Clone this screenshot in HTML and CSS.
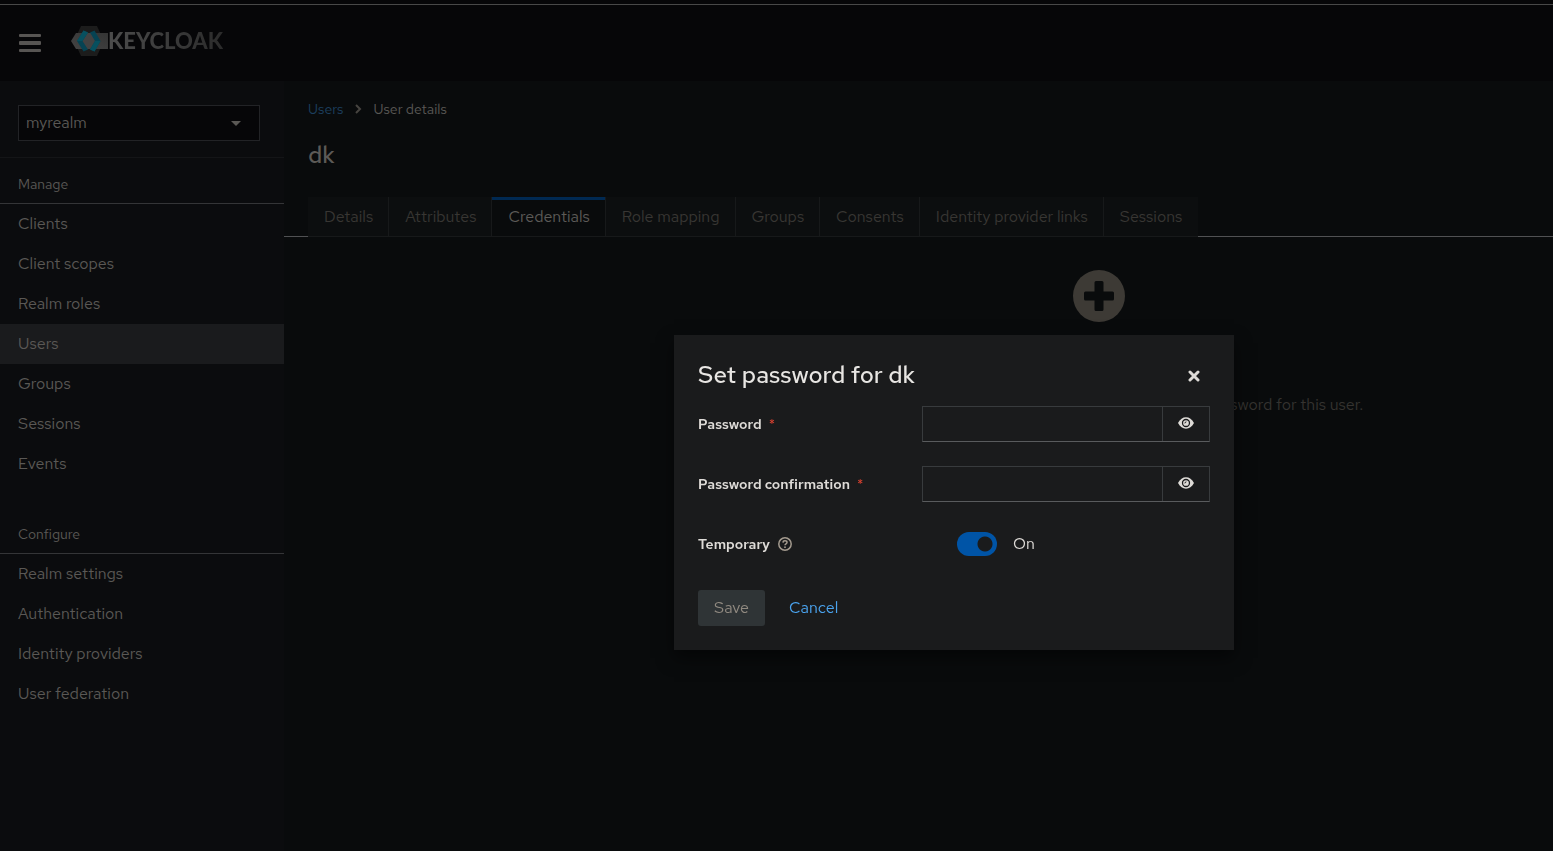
FILE: index.html
```html
<!DOCTYPE html>
<html lang="en">
<head>
<meta charset="utf-8">
<title>User details</title>
<link rel="stylesheet" href="styles.css">
</head>
<body>
<div class="page">
  <header class="masthead">
    <button class="menu-toggle" type="button" aria-label="Global navigation">
      <svg width="22" height="20" viewBox="0 0 22 20" fill="currentColor"><rect y="1" width="22" height="3" rx="1"/><rect y="8" width="22" height="4" rx="1"/><rect y="16" width="22" height="3" rx="1"/></svg>
    </button>
    <a class="brand" href="#">
      <svg width="37" height="32" viewBox="0 0 37 32">
        <defs><linearGradient id="band" x1="0" x2="1" y1="1" y2="0"><stop offset="0" stop-color="#444"/><stop offset="1" stop-color="#343434"/></linearGradient></defs>
        <path d="M10 1h16l7 15-7 15H10L3 16z" fill="#1c1c1c"/>
        <path d="M5 8h32v16H5L0 16z" fill="url(#band)"/>
        <path d="M15 8h6l4 8-4 8h-6l-4-8z" fill="#424242"/>
        <path d="M12.500 5.500l4.500 2-5.500 8.500 5.500 8.500-4.500 2L6 16z" fill="#064353"/>
        <path d="M12.500 5.500l4.500 2-5.500 8.500H6z" fill="#07505f"/>
        <path d="M19 7.500l4.500-2L29.500 16l-6 10.500-4.500-2 5-8.500z" fill="#064353"/>
        <path d="M24 16h5.500l-6 10.500-4.500-2z" fill="#07505f"/>
      </svg>
      <span class="wordmark">KEYCLOAK</span>
    </a>
  </header>
  <div class="body">
    <nav class="sidebar">
      <div class="realm">
        <button class="realm-select" type="button"><span>myrealm</span>
          <svg width="10" height="5" viewBox="0 0 10 5"><path d="M0 0h10L5 5z" fill="currentColor"/></svg>
        </button>
      </div>
      <section class="nav-group">
        <h2 class="nav-title">Manage</h2>
        <a class="nav-link" href="#">Clients</a>
        <a class="nav-link" href="#">Client scopes</a>
        <a class="nav-link" href="#">Realm roles</a>
        <a class="nav-link current" href="#">Users</a>
        <a class="nav-link" href="#">Groups</a>
        <a class="nav-link" href="#">Sessions</a>
        <a class="nav-link" href="#">Events</a>
      </section>
      <section class="nav-group">
        <h2 class="nav-title">Configure</h2>
        <a class="nav-link" href="#">Realm settings</a>
        <a class="nav-link" href="#">Authentication</a>
        <a class="nav-link" href="#">Identity providers</a>
        <a class="nav-link" href="#">User federation</a>
      </section>
    </nav>
    <main class="content">
      <div class="breadcrumb">
        <a href="#">Users</a>
        <svg width="8" height="10" viewBox="0 0 8 10"><path d="M2 1l4 4-4 4" fill="none" stroke="currentColor" stroke-width="2"/></svg>
        <span>User details</span>
      </div>
      <h1 class="title">dk</h1>
      <div class="tabs" role="tablist">
        <button class="tab" role="tab">Details</button>
        <button class="tab" role="tab">Attributes</button>
        <button class="tab active" role="tab" aria-selected="true">Credentials</button>
        <button class="tab" role="tab">Role mapping</button>
        <button class="tab" role="tab">Groups</button>
        <button class="tab" role="tab">Consents</button>
        <button class="tab" role="tab">Identity provider links</button>
        <button class="tab" role="tab">Sessions</button>
      </div>
      <div class="empty">
        <svg width="52" height="52" viewBox="0 0 52 52"><circle cx="26" cy="26" r="26" fill="#3d3a35"/><path d="M23 11h6q1.500 0 1.500 1.500v9h9q1.500 0 1.500 1.500v6q0 1.500-1.500 1.500h-9v9q0 1.500-1.500 1.500h-6q-1.500 0-1.500-1.500v-9h-9q-1.500 0-1.500-1.500v-6q0-1.500 1.500-1.500h9v-9q0-1.500 1.500-1.500z" fill="#090b0c"/></svg>
        <p>This user does not have any credentials. You can set password for this user.</p>
      </div>
    </main>
  </div>
</div>
<div class="backdrop">
  <form class="dialog" role="dialog" aria-labelledby="dialog-title">
    <div class="dialog-head">
      <h2 id="dialog-title">Set password for dk</h2>
      <button class="close" type="button" aria-label="Close">
        <svg width="12" height="12" viewBox="0 0 12 12"><path d="M2 2l8 8M10 2l-8 8" stroke="currentColor" stroke-width="3" stroke-linecap="round"/></svg>
      </button>
    </div>
    <div class="row">
      <label for="pw">Password <span class="required">*</span></label>
      <div class="field">
        <input id="pw" type="password">
        <button type="button" aria-label="Show password"><svg width="16" height="12" viewBox="0 0 16 12"><path d="M0 6C2 2.200 4.800.300 8 .300S14 2.200 16 6c-2 3.800-4.800 5.700-8 5.700S2 9.800 0 6z" fill="currentColor"/><circle cx="8" cy="6" r="3.500" fill="none" stroke="#1a1b1c" stroke-width="1.300"/><path d="M8 4.500a1.500 1.500 0 0 1-1.500 1.500" fill="none" stroke="#1a1b1c" stroke-width="1"/></svg></button>
      </div>
    </div>
    <div class="row">
      <label for="pw2">Password confirmation <span class="required">*</span></label>
      <div class="field">
        <input id="pw2" type="password">
        <button type="button" aria-label="Show password confirmation"><svg width="16" height="12" viewBox="0 0 16 12"><path d="M0 6C2 2.200 4.800.300 8 .300S14 2.200 16 6c-2 3.800-4.800 5.700-8 5.700S2 9.800 0 6z" fill="currentColor"/><circle cx="8" cy="6" r="3.500" fill="none" stroke="#1a1b1c" stroke-width="1.300"/><path d="M8 4.500a1.500 1.500 0 0 1-1.500 1.500" fill="none" stroke="#1a1b1c" stroke-width="1"/></svg></button>
      </div>
    </div>
    <div class="row">
      <div class="label-help">
        <label for="temp">Temporary</label>
        <button class="help" type="button" aria-label="Help for Temporary"><svg width="14" height="14" viewBox="0 0 14 14" fill="none" stroke="currentColor"><circle cx="7" cy="7" r="6.200" stroke-width="1.500"/><path d="M5 5.600c.1-2.400 4-2.200 4-.1 0 1.500-2 1.400-2 2.800" stroke-width="1.500"/><circle cx="7" cy="10.200" r=".9" fill="currentColor" stroke="none"/></svg></button>
      </div>
      <div class="switch"><input id="temp" type="checkbox" role="switch" checked><span>On</span></div>
    </div>
    <div class="actions">
      <button class="save" type="submit" disabled>Save</button>
      <button class="cancel" type="button">Cancel</button>
    </div>
  </form>
</div>
</body>
</html>
```
FILE: styles.css
```css
* { box-sizing: border-box; }
body { margin: 0; background: #090b0c; color: #5a5855; font: 16px/24px "Red Hat Text", Roboto, sans-serif; }
h1, h2, p { margin: 0; font-weight: 400; }
a { color: inherit; text-decoration: none; }
button, input { font: inherit; color: inherit; background: none; border: 0; border-radius: 0; margin: 0; padding: 0; }
svg { display: block; }

.page { min-height: 100vh; display: flex; flex-direction: column; padding-top: 4px; background: #060608; }
.masthead { height: 77px; border-top: 1px solid #484848; display: flex; align-items: center; gap: 30px; padding: 0 19px; }
.menu-toggle { color: #575553; }
.brand { display: flex; align-items: center; padding-bottom: 5px; }
.wordmark { font: 900 22px/32px Lato, sans-serif; background: linear-gradient(90deg, #4c4c4c, #2b2b2b); background-clip: text; color: transparent; }

.body { flex: 1; display: flex; }
.sidebar { width: 284px; flex: none; background: #0b0c0e; }
.realm { padding: 24px 24px 16px 18px; border-bottom: 1px solid #141517; }
.realm-select { width: 100%; height: 36px; border: 1px solid #222326; background: #060608; display: flex; align-items: center; justify-content: space-between; padding: 0 18px 0 7px; }
.nav-group { padding-top: 16px; margin-bottom: 24px; }
.nav-title { font-size: 14px; line-height: 21px; padding: 0 18px 8px; border-bottom: 1px solid #343537; }
.nav-link { display: block; padding: 8px 18px; }
.nav-link.current { background: #1a1b1d; }

.content { flex: 1; min-width: 0; background: #090b0c; }
.breadcrumb { display: flex; align-items: center; gap: 11px; padding: 16px 24px 0; font-size: 14px; line-height: 24px; }
.breadcrumb a { color: #1c3f5e; }
.breadcrumb svg { color: #464440; }
.title { font: 500 24px/32px "Red Hat Text", sans-serif; padding: 18px 24px 0; color: #5c5a57; }
.tabs { display: flex; margin-top: 26px; color: #383633; }
.tabs::before, .tabs::after { content: ""; width: 24px; border-bottom: 1px solid #505153; }
.tabs::after { flex: 1; }
.tab { height: 40px; padding: 0 15px 0 16px; background: #0c0e0f; border: solid #17191a; border-width: 0 1px 1px 0; white-space: nowrap; }
.tab:last-of-type { border-right: 0; padding-right: 16px; }
.tab.active { background: #090b0c; color: #5c5a57; border-left-width: 1px; margin-left: -1px; box-shadow: inset 0 3px #002952; }
.empty { display: flex; flex-direction: column; align-items: center; gap: 71px; padding: 33px 0 0 361px; color: #353330; white-space: nowrap; }

.backdrop { position: fixed; inset: 0; display: flex; align-items: flex-start; justify-content: center; padding: 335px 0 0 355px; }
.dialog { width: 560px; padding: 24px; background: #1a1b1c; color: #dedbd7; box-shadow: 0 8px 16px rgba(0, 0, 0, .5); display: flex; flex-direction: column; gap: 24px; }
.dialog-head { display: flex; align-items: center; justify-content: space-between; margin-bottom: -8px; }
.dialog-head h2 { font: 500 24px/31px "Red Hat Text", sans-serif; color: #e8e6e3; }
.close { padding: 8px 10px 6px; }
.row { display: grid; grid-template-columns: 224px 1fr; align-items: center; min-height: 36px; }
.row label { font-size: 14px; font-weight: 600; }
.required { color: #d6402f; padding-left: 4px; font-size: 14px; font-weight: 400; }
.field { display: flex; height: 36px; border: 1px solid #383b3d; border-bottom-color: #595b5d; }
.field input { flex: 1; min-width: 0; padding: 0 8px; }
.field button { width: 47px; border-left: 1px solid #383b3d; display: flex; justify-content: center; align-items: center; padding-bottom: 2px; }
.label-help { display: flex; align-items: center; gap: 8px; }
.help { color: #a39a8e; }
.switch { display: flex; align-items: center; gap: 16px; padding-left: 35px; }
.switch input { appearance: none; width: 40px; height: 24px; border-radius: 12px; background: radial-gradient(circle at 28px 12px, #1a1b1c 7px, #0054a6 8px); }
.actions { display: flex; gap: 8px; padding-top: 4px; }
.actions button { height: 36px; padding: 0 16px; border-radius: 3px; }
.save { background: #2f3436; color: #918a81; }
.cancel { color: #4aa3ee; }
```
